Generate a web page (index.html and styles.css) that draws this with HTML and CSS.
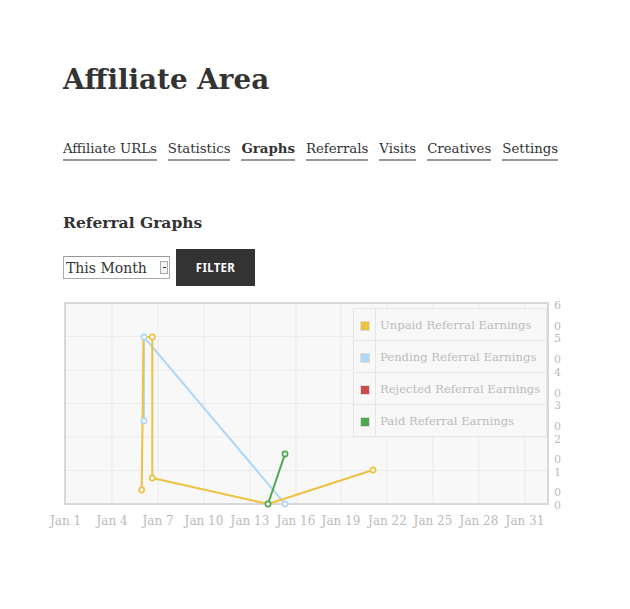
FILE: index.html
```html
<!DOCTYPE html>
<html>
    <head>
        <title>Affiliate Area</title>
        <link rel="stylesheet" href="styles.css">
    </head>
    <body>
        <div class="page">

            <h1 class="entry-title">Affiliate Area</h1>

            <ul class="tabs">
                <li><a href="#">Affiliate URLs</a></li>
                <li><a href="#">Statistics</a></li>
                <li class="active"><a href="#">Graphs</a></li>
                <li><a href="#">Referrals</a></li>
                <li><a href="#">Visits</a></li>
                <li><a href="#">Creatives</a></li>
                <li><a href="#">Settings</a></li>
            </ul>

            <h4 class="graph-title">Referral Graphs</h4>

            <form class="filter">
                <span class="select-wrap">
                    <select class="range">
                        <option>This Month</option>
                        <option>Last Month</option>
                        <option>This Year</option>
                    </select>
                </span>
                <button type="button" class="filter-btn">Filter</button>
            </form>

            <div class="graph">
                <svg class="plot" width="540" height="240" viewBox="0 0 540 240">
                    <rect x="25" y="5" width="483" height="201" class="plot-bg"/>
                    <g class="grid">
                        <line x1="72" y1="5" x2="72" y2="206"/>
                        <line x1="118" y1="5" x2="118" y2="206"/>
                        <line x1="164" y1="5" x2="164" y2="206"/>
                        <line x1="210" y1="5" x2="210" y2="206"/>
                        <line x1="256" y1="5" x2="256" y2="206"/>
                        <line x1="301" y1="5" x2="301" y2="206"/>
                        <line x1="347" y1="5" x2="347" y2="206"/>
                        <line x1="393" y1="5" x2="393" y2="206"/>
                        <line x1="439" y1="5" x2="439" y2="206"/>
                        <line x1="485" y1="5" x2="485" y2="206"/>
                        <line x1="25" y1="38.5" x2="508" y2="38.5"/>
                        <line x1="25" y1="72" x2="508" y2="72"/>
                        <line x1="25" y1="105.5" x2="508" y2="105.5"/>
                        <line x1="25" y1="139" x2="508" y2="139"/>
                        <line x1="25" y1="172.5" x2="508" y2="172.5"/>
                    </g>
                    <rect x="25" y="5" width="483" height="201" class="plot-border"/>

                    <g class="series">
                        <polyline stroke="#afd8f8" points="104,123 104,39 245,206"/>
                        <polyline stroke="#edc240" points="101.7,192 103.5,39 112.3,39 112.3,180 228,206 333,172"/>
                        <polyline stroke="#4da74d" points="228,206 245,156"/>
                    </g>
                    <g class="dots">
                        <circle stroke="#edc240" cx="101.7" cy="192" r="2.6"/>
                        <circle stroke="#edc240" cx="112.3" cy="39" r="2.6"/>
                        <circle stroke="#edc240" cx="112.3" cy="180" r="2.6"/>
                        <circle stroke="#edc240" cx="333" cy="172" r="2.6"/>
                        <circle stroke="#afd8f8" cx="104" cy="39" r="2.6"/>
                        <circle stroke="#afd8f8" cx="104" cy="123" r="2.6"/>
                        <circle stroke="#afd8f8" cx="245" cy="206" r="2.6"/>
                        <circle stroke="#4da74d" cx="228" cy="206" r="2.6"/>
                        <circle stroke="#4da74d" cx="245" cy="156" r="2.6"/>
                    </g>

                    <g class="x-labels">
                        <text x="25.5" y="227">Jan 1</text>
                        <text x="72" y="227">Jan 4</text>
                        <text x="118" y="227">Jan 7</text>
                        <text x="164" y="227">Jan 10</text>
                        <text x="210" y="227">Jan 13</text>
                        <text x="256" y="227">Jan 16</text>
                        <text x="301" y="227">Jan 19</text>
                        <text x="347.5" y="227">Jan 22</text>
                        <text x="393" y="227">Jan 25</text>
                        <text x="439" y="227">Jan 28</text>
                        <text x="485" y="227">Jan 31</text>
                    </g>
                    <g class="y-labels">
                        <text x="514" y="11">6</text>
                        <text x="514" y="31.5">0<tspan x="514" dy="12.5">5</tspan></text>
                        <text x="514" y="65">0<tspan x="514" dy="12.5">4</tspan></text>
                        <text x="514" y="98.5">0<tspan x="514" dy="12.5">3</tspan></text>
                        <text x="514" y="132">0<tspan x="514" dy="12.5">2</tspan></text>
                        <text x="514" y="165">0<tspan x="514" dy="12.5">1</tspan></text>
                        <text x="514" y="198">0<tspan x="514" dy="12.5">0</tspan></text>
                    </g>
                </svg>

                <table class="legend">
                    <tr>
                        <td class="swatch"><span style="background:#edc240"></span></td>
                        <td class="label">Unpaid Referral Earnings</td>
                    </tr>
                    <tr>
                        <td class="swatch"><span style="background:#afd8f8"></span></td>
                        <td class="label">Pending Referral Earnings</td>
                    </tr>
                    <tr>
                        <td class="swatch"><span style="background:#cb4b4b"></span></td>
                        <td class="label">Rejected Referral Earnings</td>
                    </tr>
                    <tr>
                        <td class="swatch"><span style="background:#4da74d"></span></td>
                        <td class="label">Paid Referral Earnings</td>
                    </tr>
                </table>
            </div>

        </div>
    </body>
</html>
```

FILE: styles.css
```css
body{
    margin: 0;
    background: #fff;
    color: #333;
    font-family: "DejaVu Serif", "Liberation Serif", serif;
}

.page{
    padding: 62px 0 0 63px;
}

.entry-title{
    margin: 0;
    font-size: 27.8px;
    line-height: 36px;
    font-weight: bold;
    color: #333;
}

.tabs{
    display: flex;
    gap: 11px;
    list-style: none;
    margin: 41px 0 0;
    padding: 0;
}

.tabs a{
    display: block;
    font-size: 13.3px;
    line-height: 20px;
    color: #333;
    text-decoration: none;
    border-bottom: 2px solid #999;
}

.tabs .active a{
    font-weight: bold;
}

.graph-title{
    margin: 50px 0 0;
    font-size: 15.5px;
    line-height: 24px;
    font-weight: bold;
}

.filter{
    display: flex;
    align-items: center;
    gap: 6px;
    margin-top: 14px;
}

.select-wrap{
    position: relative;
    display: block;
}

.select-wrap::after{
    content: "";
    position: absolute;
    top: 5px;
    right: 2px;
    width: 6px;
    height: 11px;
    border: 1px solid #aaa;
    background: linear-gradient(#333, #333) center / 3px 1px no-repeat, #f2f2f2;
    pointer-events: none;
}

.range{
    display: block;
    width: 107px;
    height: 23px;
    -webkit-appearance: none;
    appearance: none;
    font-family: "DejaVu Serif", serif;
    font-size: 14px;
    color: #333;
    background: #fff;
    border: 1px solid #aaa;
    border-top-color: #999;
    border-radius: 0;
    padding: 0 0 0 2px;
}

.filter-btn{
    width: 79px;
    height: 37px;
    background: #333;
    color: #fff;
    border: none;
    font-family: "Noto Sans", "DejaVu Sans", sans-serif;
    font-weight: bold;
    font-size: 11.5px;
    letter-spacing: 0.3px;
    text-transform: uppercase;
}

.graph{
    position: relative;
    margin: 12px 0 0 -23px;
    width: 540px;
    height: 240px;
}

.plot{
    display: block;
}

.plot-bg{
    fill: #f8f8f8;
}

.plot-border{
    fill: none;
    stroke: #d8d8d8;
    stroke-width: 2;
}

.grid line{
    stroke: #ebebeb;
    stroke-width: 1;
}

.series polyline{
    fill: none;
    stroke-width: 2;
    stroke-linejoin: round;
}

.dots circle{
    fill: #fff;
    stroke-width: 1.6;
}

.x-labels text{
    font-family: "DejaVu Serif", serif;
    font-size: 12px;
    fill: #bbb;
    text-anchor: middle;
}

.y-labels text{
    font-family: "DejaVu Serif", serif;
    font-size: 11px;
    fill: #bbb;
}

.legend{
    position: absolute;
    top: 10px;
    left: 313px;
    border-collapse: collapse;
    background: #f8f8f8;
    border: 1px solid #e6e6e6;
}

.legend td{
    border: 1px solid #e6e6e6;
    height: 31px;
    padding: 0;
}

.legend .swatch{
    width: 21px;
    text-align: center;
}

.legend .swatch span{
    display: inline-block;
    width: 8px;
    height: 8px;
    border: 1px solid #ddd;
    vertical-align: middle;
}

.legend .label{
    padding: 0 6px 0 4px;
    font-size: 11.6px;
    color: #bbb;
    white-space: nowrap;
}
```
